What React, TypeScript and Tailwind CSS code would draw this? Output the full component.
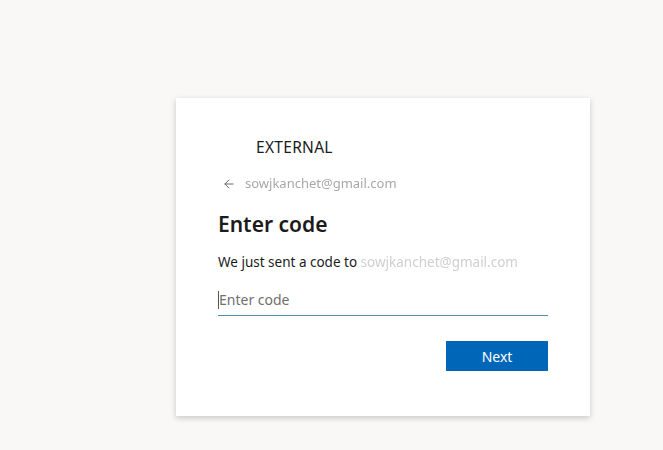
import { ArrowLeft } from 'lucide-react';

export default function App(): JSX.Element {
  return (
    <div
      className="w-[663px] h-[450px] bg-[#f9f8f7] pt-[98px] pl-[176px]"
      style={{ fontFamily: '"Noto Sans", "Open Sans", sans-serif' }}
    >
      <div className="w-[414px] h-[318px] bg-white shadow-[0_2px_6px_rgba(0,0,0,0.2)] px-[42px] pt-[38px]">
        <div className="flex items-center h-[24px] pl-[38px]">
          <span className="text-[15.5px] text-[#1b1b1b] tracking-[0.3px]">EXTERNAL</span>
        </div>
        <div className="flex items-center mt-[14px] h-[20px] pl-[4px]">
          <ArrowLeft className="w-[14px] h-[14px] text-[#555]" strokeWidth={1.5} aria-hidden="true" />
          <span className="ml-[9px] text-[13px] text-[#a8a8a8] blur-[0.5px]">sowjkanchet@gmail.com</span>
        </div>
        <h1 className="mt-[16px] text-[21px] font-semibold text-[#1b1b1b] leading-[28px]">Enter code</h1>
        <p className="mt-[14px] text-[13.5px] text-[#1b1b1b] leading-[20px]">
          We just sent a code to{' '}
          <span className="text-[#cfcfcf] blur-[0.5px]">sowjkanchet@gmail.com</span>
        </p>
        <div className="mt-[12px] border-b border-[#4a93ab] h-[32px] flex items-center">
          <span className="w-px h-[18px] bg-[#555]" />
          <span className="text-[14px] text-[#707070]">Enter code</span>
        </div>
        <div className="flex justify-end mt-[25px]">
          <button className="w-[102px] h-[30px] bg-[#0067b8] text-white text-[14px]">Next</button>
        </div>
      </div>
    </div>
  );
}
